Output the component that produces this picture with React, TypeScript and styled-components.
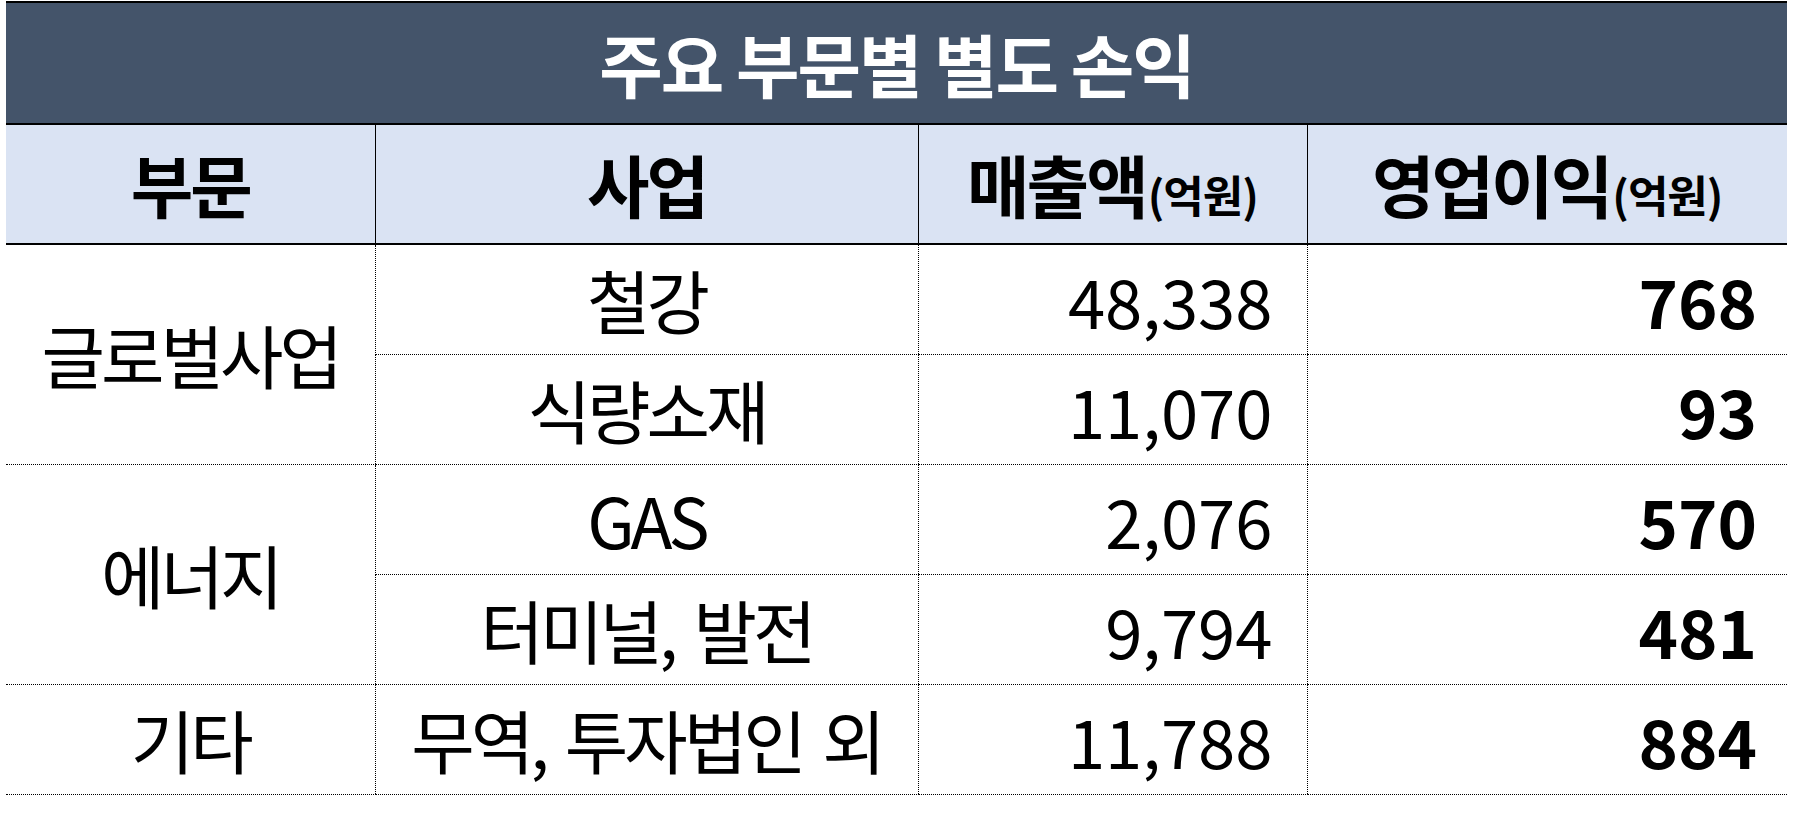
import styled, { createGlobalStyle } from 'styled-components';

const GlobalStyle = createGlobalStyle`
  html, body {
    margin: 0;
    padding: 0;
    background: #fff;
  }
  body {
    font-family: "Noto Sans CJK KR", "Noto Sans", sans-serif;
    color: #000;
  }
`;

const Page = styled.div`
  padding: 1px 6px 0 6px;
`;

const Table = styled.table`
  width: 1781px;
  border-collapse: collapse;
  table-layout: fixed;
`;

const TitleCell = styled.th`
  height: 120px;
  padding: 0;
  background: #44546a;
  color: #fff;
  font-size: 69px;
  font-weight: 700;
  letter-spacing: -2px;
  border-top: 2px solid #000;
  border-bottom: 2px solid #000;
  text-align: center;
  vertical-align: middle;
  line-height: 1;
`;

const HeadCell = styled.th`
  height: 118px;
  padding: 0;
  background: #dae3f3;
  font-size: 68px;
  font-weight: 700;
  letter-spacing: -3px;
  text-align: center;
  vertical-align: middle;
  line-height: 1;
  border-bottom: 2px solid #000;
  & + & {
    border-left: 1px solid #000;
  }
`;

const Unit = styled.span`
  font-size: 44px;
  letter-spacing: -1px;
  margin-left: 2px;
`;

const Cell = styled.td<{ $align?: 'left' | 'center' | 'right'; $bold?: boolean; $num?: boolean; $pad?: number }>`
  height: 109px;
  padding: 0 ${p => (p.$pad ? `${p.$pad}px` : '0')} 0 0;
  text-align: ${p => p.$align ?? 'center'};
  vertical-align: middle;
  font-size: ${p => (p.$num ? '67px' : '69px')};
  font-weight: ${p => (p.$bold ? 700 : 400)};
  letter-spacing: ${p => (p.$num ? '0' : '-4px')};
  word-spacing: ${p => (p.$num ? '0' : '8px')};
  line-height: 1;
  border-bottom: 1px dotted #000;
  border-left: 1px dotted #000;
  &:first-child {
    border-left: none;
  }
`;

type Row = {
  group?: string;
  span?: number;
  biz: string;
  sales: string;
  profit: string;
};

const rows: Row[] = [
  { group: '글로벌사업', span: 2, biz: '철강', sales: '48,338', profit: '768' },
  { biz: '식량소재', sales: '11,070', profit: '93' },
  { group: '에너지', span: 2, biz: 'GAS', sales: '2,076', profit: '570' },
  { biz: '터미널, 발전', sales: '9,794', profit: '481' },
  { group: '기타', span: 1, biz: '무역, 투자법인 외', sales: '11,788', profit: '884' },
];

const App = () => {
  return (
    <>
      <GlobalStyle />
      <Page>
        <Table>
          <colgroup>
            <col style={{ width: 369 }} />
            <col style={{ width: 543 }} />
            <col style={{ width: 389 }} />
            <col style={{ width: 480 }} />
          </colgroup>
          <thead>
            <tr>
              <TitleCell colSpan={4}>주요 부문별 별도 손익</TitleCell>
            </tr>
            <tr>
              <HeadCell>부문</HeadCell>
              <HeadCell>사업</HeadCell>
              <HeadCell>
                매출액<Unit>(억원)</Unit>
              </HeadCell>
              <HeadCell>
                영업이익<Unit>(억원)</Unit>
              </HeadCell>
            </tr>
          </thead>
          <tbody>
            {rows.map(r => (
              <tr key={r.biz}>
                {r.group && <Cell rowSpan={r.span}>{r.group}</Cell>}
                <Cell style={r.group ? undefined : { borderLeft: '1px dotted #000' }}>{r.biz}</Cell>
                <Cell $align="right" $num $pad={34}>
                  {r.sales}
                </Cell>
                <Cell $align="right" $num $bold $pad={30}>
                  {r.profit}
                </Cell>
              </tr>
            ))}
          </tbody>
        </Table>
      </Page>
    </>
  );
};

export default App;
